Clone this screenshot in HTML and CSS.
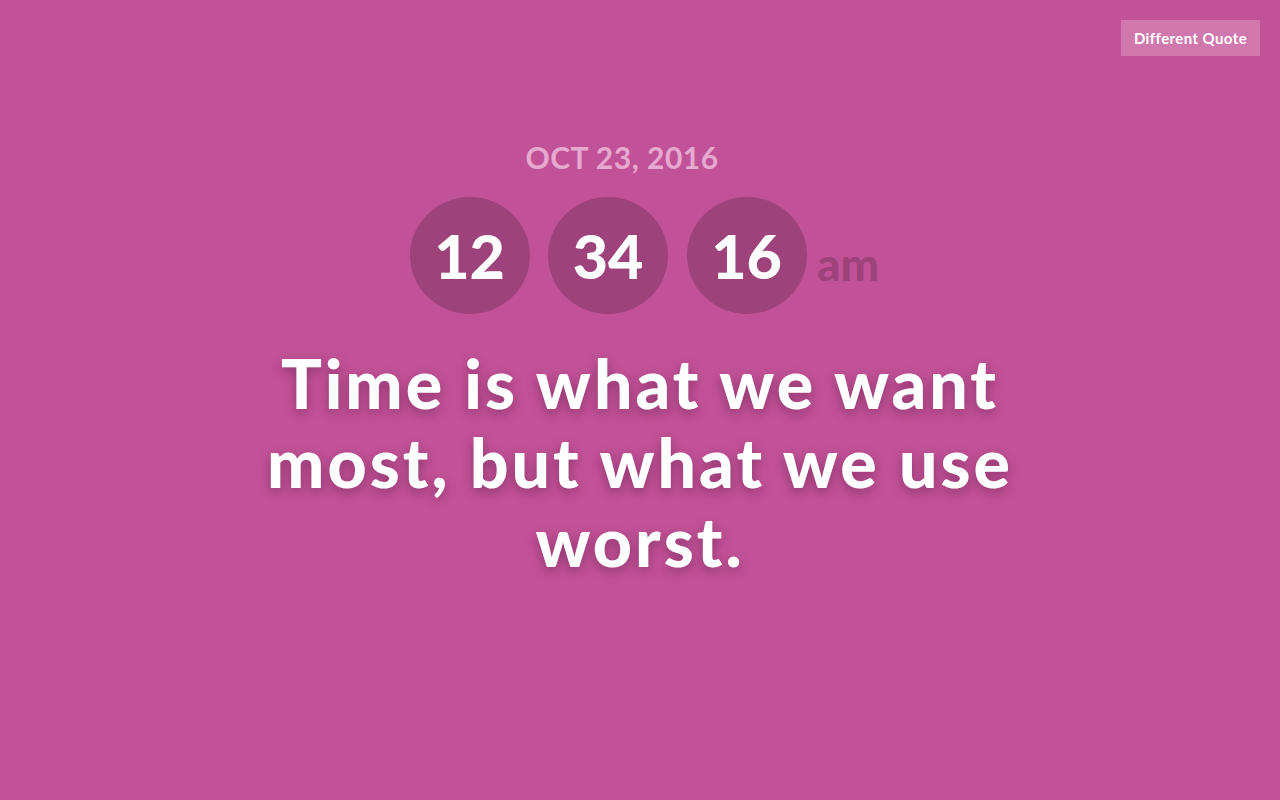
FILE: index.html
```html
<!DOCTYPE html>
<html>
<head>
<meta charset="utf-8">
<link rel="stylesheet" href="styles.css">
</head>
<body>
<div class="page">
  <div class="topbar"><button class="btn">Different Quote</button></div>
  <main class="center">
    <div class="date">OCT 23, 2016</div>
    <div class="clock">
      <div class="circle">12</div>
      <div class="circle">34</div>
      <div class="circle">16</div>
      <div class="ampm">am</div>
    </div>
    <p class="quote">Time is what we want most, but what we use worst.</p>
  </main>
</div>
</body>
</html>
```
FILE: styles.css
```css
html, body { margin: 0; padding: 0; }
body {
  background: #c25297;
  font-family: Lato, "Open Sans", sans-serif;
  width: 1280px;
  height: 800px;
  overflow: hidden;
}
.page { display: flex; flex-direction: column; height: 800px; }
.topbar { display: flex; justify-content: flex-end; padding: 20px 20px 0 0; }
.btn {
  background: #d077ae;
  color: #fff;
  border: none;
  font-family: Lato, sans-serif;
  font-weight: 700;
  font-size: 15px;
  letter-spacing: 0.4px;
  width: 139px;
  height: 36px;
  padding: 0;
}
.center { display: flex; flex-direction: column; align-items: center; }
.date {
  margin-top: 83px;
  margin-left: -36px;
  color: #e6aad0;
  font-weight: 700;
  font-size: 30px;
  line-height: 36px;
  letter-spacing: 0.5px;
}
.clock { display: flex; align-items: center; gap: 18.5px; margin-top: 22px; margin-left: 9px; }
.circle {
  width: 120px; height: 117px; border-radius: 50%;
  background: #9e427c;
  color: #fff;
  font-weight: 900;
  font-size: 61px;
  display: flex; align-items: center; justify-content: center;
}
.ampm { color: #9e427c; font-weight: 900; font-size: 46px; margin-left: -8px; margin-top: 16px; }
.quote {
  margin: 29px 0 0;
  width: 840px;
  text-align: center;
  color: #fff;
  font-weight: 900;
  font-size: 68px;
  line-height: 79px;
  letter-spacing: 3px;
  text-shadow: 0 4px 12px rgba(80, 20, 60, 0.45);
}
```
